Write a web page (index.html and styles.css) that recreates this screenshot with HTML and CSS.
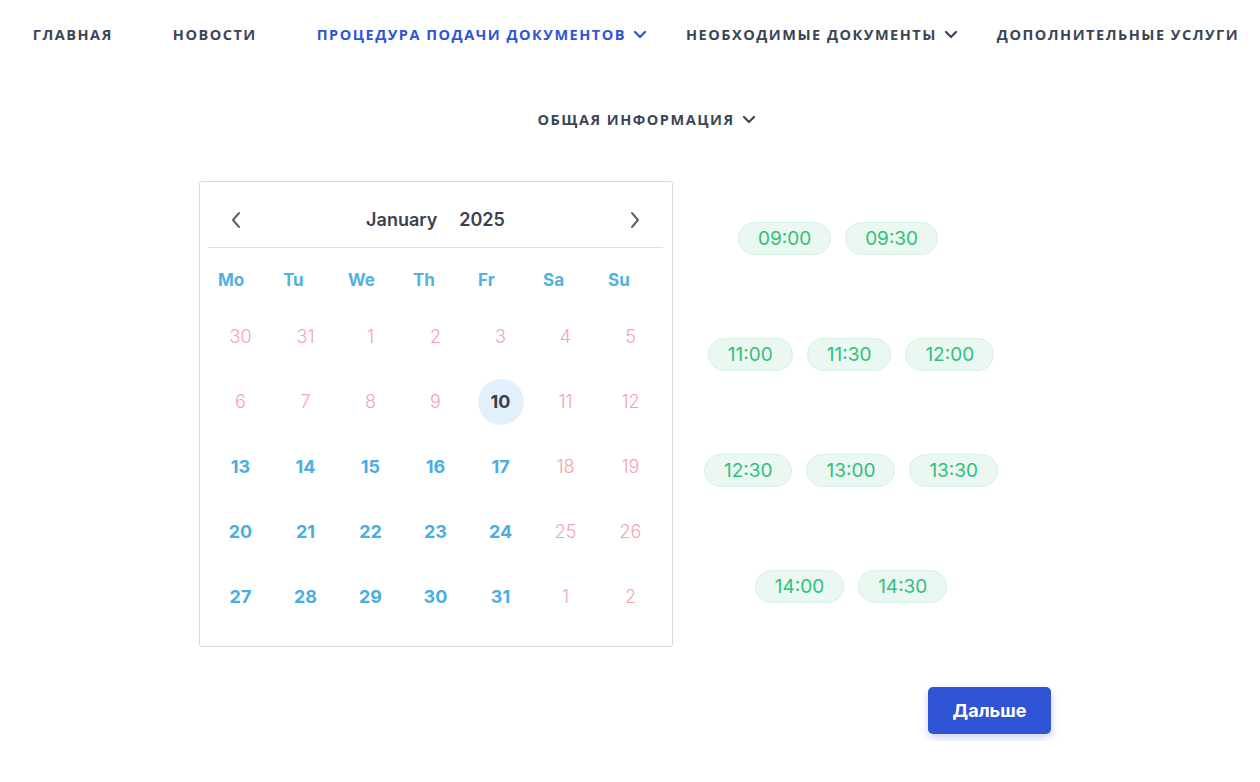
FILE: index.html
```html
<!DOCTYPE html>
<html lang="ru">
<head>
<meta charset="utf-8">
<title>Запись</title>
<link rel="stylesheet" href="styles.css">
</head>
<body>
<nav class="nav">
  <ul class="nav-row">
    <li class="nav-item"><a href="#">ГЛАВНАЯ</a></li>
    <li class="nav-item"><a href="#">НОВОСТИ</a></li>
    <li class="nav-item active"><a href="#">ПРОЦЕДУРА ПОДАЧИ ДОКУМЕНТОВ</a><svg class="caret" viewBox="0 0 14 9" width="14" height="9"><path d="M2 2l5 5 5-5" fill="none" stroke="currentColor" stroke-width="2.2" stroke-linecap="round" stroke-linejoin="round"/></svg></li>
    <li class="nav-item"><a href="#">НЕОБХОДИМЫЕ ДОКУМЕНТЫ</a><svg class="caret" viewBox="0 0 14 9" width="14" height="9"><path d="M2 2l5 5 5-5" fill="none" stroke="currentColor" stroke-width="2.2" stroke-linecap="round" stroke-linejoin="round"/></svg></li>
    <li class="nav-item"><a href="#">ДОПОЛНИТЕЛЬНЫЕ УСЛУГИ</a></li>
  </ul>
  <ul class="nav-row second">
    <li class="nav-item"><a href="#">ОБЩАЯ ИНФОРМАЦИЯ</a><svg class="caret" viewBox="0 0 14 9" width="14" height="9"><path d="M2 2l5 5 5-5" fill="none" stroke="currentColor" stroke-width="2.2" stroke-linecap="round" stroke-linejoin="round"/></svg></li>
  </ul>
</nav>

<section class="booking">
  <div class="booking-inner">
    <div class="booking-row">
      <div class="calendar">
        <div class="cal-head">
          <button class="cal-arrow" aria-label="prev"><svg viewBox="0 0 12 18" width="12" height="18"><path d="M9 2L3 9l6 7" fill="none" stroke="currentColor" stroke-width="2" stroke-linecap="round" stroke-linejoin="round"/></svg></button>
          <div class="cal-title"><span>January</span><span>2025</span></div>
          <button class="cal-arrow" aria-label="next"><svg viewBox="0 0 12 18" width="12" height="18"><path d="M3 2l6 7-6 7" fill="none" stroke="currentColor" stroke-width="2" stroke-linecap="round" stroke-linejoin="round"/></svg></button>
        </div>
        <div class="cal-weekdays">
          <span>Mo</span><span>Tu</span><span>We</span><span>Th</span><span>Fr</span><span>Sa</span><span>Su</span>
        </div>
        <div class="cal-grid">
          <span class="day off">30</span><span class="day off">31</span><span class="day off">1</span><span class="day off">2</span><span class="day off">3</span><span class="day off">4</span><span class="day off">5</span>
          <span class="day off">6</span><span class="day off">7</span><span class="day off">8</span><span class="day off">9</span><span class="day selected"><b>10</b></span><span class="day off">11</span><span class="day off">12</span>
          <span class="day on">13</span><span class="day on">14</span><span class="day on">15</span><span class="day on">16</span><span class="day on">17</span><span class="day off">18</span><span class="day off">19</span>
          <span class="day on">20</span><span class="day on">21</span><span class="day on">22</span><span class="day on">23</span><span class="day on">24</span><span class="day off">25</span><span class="day off">26</span>
          <span class="day on">27</span><span class="day on">28</span><span class="day on">29</span><span class="day on">30</span><span class="day on">31</span><span class="day off">1</span><span class="day off">2</span>
        </div>
      </div>
      <div class="times">
        <div class="time-row first"><span class="slot">09:00</span><span class="slot">09:30</span></div>
        <div class="time-row"><span class="slot">11:00</span><span class="slot">11:30</span><span class="slot">12:00</span></div>
        <div class="time-row"><span class="slot">12:30</span><span class="slot">13:00</span><span class="slot">13:30</span></div>
        <div class="time-row"><span class="slot">14:00</span><span class="slot">14:30</span></div>
      </div>
    </div>
    <div class="actions">
      <button class="btn-next">Дальше</button>
    </div>
  </div>
</section>
</body>
</html>
```

FILE: styles.css
```css
* { box-sizing: border-box; }
html, body { margin: 0; background: #ffffff; }
body { font-family: "Inter", "Noto Sans", sans-serif; color: #3c4250; overflow-x: hidden; }

.nav { padding: 24px 0 0 12px; }
.nav-row {
  list-style: none;
  margin: 0;
  padding: 0;
  display: flex;
  flex-wrap: nowrap;
  justify-content: center;
}
.nav-row.second { margin-top: 65px; }
.nav-item {
  display: flex;
  align-items: center;
  flex: none;
  height: 20px;
  padding: 0 30px;
  color: #3b4556;
  font-family: "Open Sans", "Noto Sans", sans-serif;
  font-weight: 700;
  font-size: 14.5px;
  letter-spacing: 1.5px;
  white-space: nowrap;
}
.nav-item a { color: inherit; text-decoration: none; }
.nav-item.active { color: #2f55d4; }
.caret { margin-left: 7px; margin-right: -21px; flex: none; }

.booking {
  width: 1100px;
  margin: 52px auto 0;
  padding-bottom: 7px;
  box-shadow: 0 5px 5px -4px rgba(0, 0, 0, 0.035);
}
.booking-inner { margin-left: 119px; width: 852px; }
.booking-row { display: flex; align-items: flex-start; }

.calendar {
  width: 474px;
  border: 1px solid #d4d9e2;
  border-radius: 3px;
  padding: 0 9px 17px 8px;
}
.cal-head {
  height: 66px;
  display: flex;
  align-items: center;
  justify-content: space-between;
  padding: 10px 22px 0 22px;
  border-bottom: 1px solid #dde1e7;
}
.cal-arrow {
  border: 0;
  background: none;
  padding: 0;
  width: 12px;
  height: 18px;
  color: #5b626e;
  display: flex;
}
.cal-title {
  display: flex;
  gap: 22px;
  font-size: 18px;
  font-weight: 600;
  color: #3d424c;
}
.cal-weekdays {
  display: grid;
  grid-template-columns: repeat(7, 65px);
  height: 56px;
  padding-top: 22px;
}
.cal-weekdays span {
  padding-left: 10px;
  font-size: 17px;
  line-height: 20px;
  font-weight: 700;
  color: #52b1e1;
}
.cal-grid {
  display: grid;
  grid-template-columns: repeat(7, 65px);
  grid-auto-rows: 65px;
}
.day {
  display: flex;
  align-items: center;
  justify-content: center;
  font-size: 18px;
}
.day.off { color: #f4a3ac; font-weight: 300; }
.day.on { color: #4aaedf; font-weight: 700; }
.day.selected b {
  width: 46px;
  height: 46px;
  border-radius: 50%;
  background: #e2f0fc;
  color: #3a3f48;
  font-weight: 700;
  display: flex;
  align-items: center;
  justify-content: center;
}

.times {
  width: 300px;
  margin-left: 28px;
  margin-top: 41px;
  display: flex;
  flex-direction: column;
  gap: 83px;
}
.time-row { display: flex; justify-content: center; gap: 14px; }
.time-row.first { padding-right: 26px; }
.slot {
  height: 33px;
  padding: 0 19px;
  display: flex;
  align-items: center;
  border-radius: 17px;
  background: #eaf8f1;
  border: 1px solid #d5f1e3;
  color: #2fc07c;
  font-size: 19px;
  font-weight: 400;
}

.actions { display: flex; justify-content: flex-end; margin-top: 40px; }
.btn-next {
  width: 123px;
  height: 47px;
  border: 0;
  border-radius: 5px;
  background: #2f55d4;
  color: #ffffff;
  font-family: "Inter", "Noto Sans", sans-serif;
  font-size: 18px;
  font-weight: 700;
  box-shadow: 0 4px 8px rgba(47, 85, 212, 0.25);
}
```
